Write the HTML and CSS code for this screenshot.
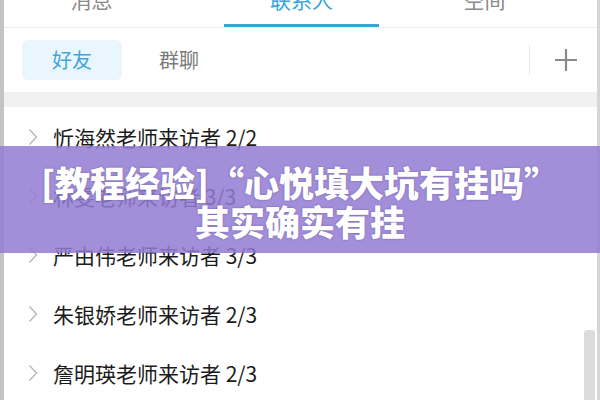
FILE: index.html
```html
<!DOCTYPE html>
<html lang="zh-CN">
<head>
<meta charset="utf-8">
<title>联系人</title>
<link rel="stylesheet" href="styles.css">
</head>
<body>
<div class="frame">
  <div class="edge-left"></div>
  <div class="panel">
    <nav class="tabs">
      <div class="tab tab-msg"><span>消息</span></div>
      <div class="tab tab-contacts active"><span>联系人</span></div>
      <div class="tab tab-space"><span>空间</span></div>
    </nav>
    <div class="subtabs">
      <div class="pill active">好友</div>
      <div class="pill">群聊</div>
      <div class="spacer"></div>
      <div class="divider"></div>
      <div class="add">
        <svg width="24" height="24" viewBox="0 0 24 24"><path d="M12 1v22M1 12h22" stroke="#8a8a8a" stroke-width="2.2" fill="none"/></svg>
      </div>
    </div>
    <div class="band"></div>
    <ul class="list">
      <li class="row"><svg class="chev" width="10" height="18" viewBox="0 0 10 18"><path d="M1.5 1.5L8.5 9L1.5 16.5" stroke="#b4b4b4" stroke-width="1.3" fill="none"/></svg><span class="name">忻海然老师来访者 2/2</span></li>
      <li class="row"><svg class="chev" width="10" height="18" viewBox="0 0 10 18"><path d="M1.5 1.5L8.5 9L1.5 16.5" stroke="#b4b4b4" stroke-width="1.3" fill="none"/></svg><span class="name">林雯老师来访者 3/3</span></li>
      <li class="row"><svg class="chev" width="10" height="18" viewBox="0 0 10 18"><path d="M1.5 1.5L8.5 9L1.5 16.5" stroke="#b4b4b4" stroke-width="1.3" fill="none"/></svg><span class="name">严由伟老师来访者 3/3</span></li>
      <li class="row"><svg class="chev" width="10" height="18" viewBox="0 0 10 18"><path d="M1.5 1.5L8.5 9L1.5 16.5" stroke="#b4b4b4" stroke-width="1.3" fill="none"/></svg><span class="name">朱银娇老师来访者 2/3</span></li>
      <li class="row"><svg class="chev" width="10" height="18" viewBox="0 0 10 18"><path d="M1.5 1.5L8.5 9L1.5 16.5" stroke="#b4b4b4" stroke-width="1.3" fill="none"/></svg><span class="name">詹明瑛老师来访者 2/3</span></li>
    </ul>
    <div class="scrollbar"></div>
  </div>
  <div class="edge-right"></div>
  <div class="banner">
    <div class="banner-title">[教程经验]“心悦填大坑有挂吗”<br>其实确实有挂</div>
  </div>
</div>
</body>
</html>
```

FILE: styles.css
```css
html, body {
  margin: 0;
  padding: 0;
  width: 600px;
  height: 400px;
  overflow: hidden;
  background: #ffffff;
  font-family: "Noto Sans CJK SC", "Liberation Sans", sans-serif;
}

.frame {
  position: relative;
  display: flex;
  width: 600px;
  height: 400px;
  overflow: hidden;
}

.edge-left {
  width: 4px;
  background: #c4c4c4;
  flex: none;
}

.edge-right {
  width: 3px;
  background: #d6d6d6;
  flex: none;
}

.panel {
  position: relative;
  flex: 1;
  display: flex;
  flex-direction: column;
  background: #ffffff;
}

/* top tabs, scrolled so only the bottom of the labels shows */
.tabs {
  display: flex;
  height: 27px;
  border-bottom: 1px solid #ececec;
  padding-left: 10px;
  flex: none;
}

.tab {
  width: 155px;
  height: 27px;
  box-sizing: border-box;
  border-bottom: 3px solid transparent;
  text-align: center;
  color: #8a8a8a;
  font-size: 21px;
  line-height: 20px;
}

.tab span {
  display: block;
  margin-top: -11px;
}

.tab-contacts { margin-left: 55px; }
.tab-space { margin-left: 28px; }

.tab.active {
  color: #36a6da;
  border-bottom-color: #36a6da;
}

/* secondary row */
.subtabs {
  display: flex;
  align-items: center;
  height: 64px;
  padding: 0 19px 0 18px;
  flex: none;
}

.pill {
  width: 100px;
  height: 40px;
  border-radius: 6px;
  text-align: center;
  line-height: 40px;
  font-size: 20px;
  color: #7a7a7a;
}

.pill + .pill { margin-left: 7px; }

.pill.active {
  background: #eaf6fd;
  color: #3fa6da;
}

.spacer { flex: 1; }

.divider {
  width: 1px;
  height: 30px;
  background: #e6e6e6;
  margin-right: 24px;
}

.add {
  width: 24px;
  height: 24px;
}

.add svg { display: block; }

.band {
  height: 15px;
  background: #f1f1f1;
  flex: none;
}

.list {
  list-style: none;
  margin: 0;
  padding: 0;
}

.row {
  display: flex;
  align-items: center;
  height: 59px;
  padding-left: 24px;
}

.chev {
  display: block;
  flex: none;
}

.name {
  margin-left: 15px;
  font-size: 21px;
  color: #1b1b1b;
  white-space: nowrap;
}

.scrollbar {
  position: absolute;
  right: 2px;
  top: 330px;
  width: 11px;
  height: 80px;
  border-radius: 3px 3px 0 0;
  background: #dcdcdc;
}

/* overlaid caption banner */
.banner {
  position: absolute;
  left: 0;
  right: 0;
  top: 146px;
  height: 107px;
  background: rgba(147, 123, 211, 0.86);
  box-sizing: border-box;
  padding-top: 16px;
}

.banner-title {
  text-align: center;
  color: #ffffff;
  font-weight: 900;
  font-size: 35px;
  line-height: 39px;
  text-shadow: 0 0 2px rgba(70, 50, 120, 0.55);
  white-space: nowrap;
}
```
